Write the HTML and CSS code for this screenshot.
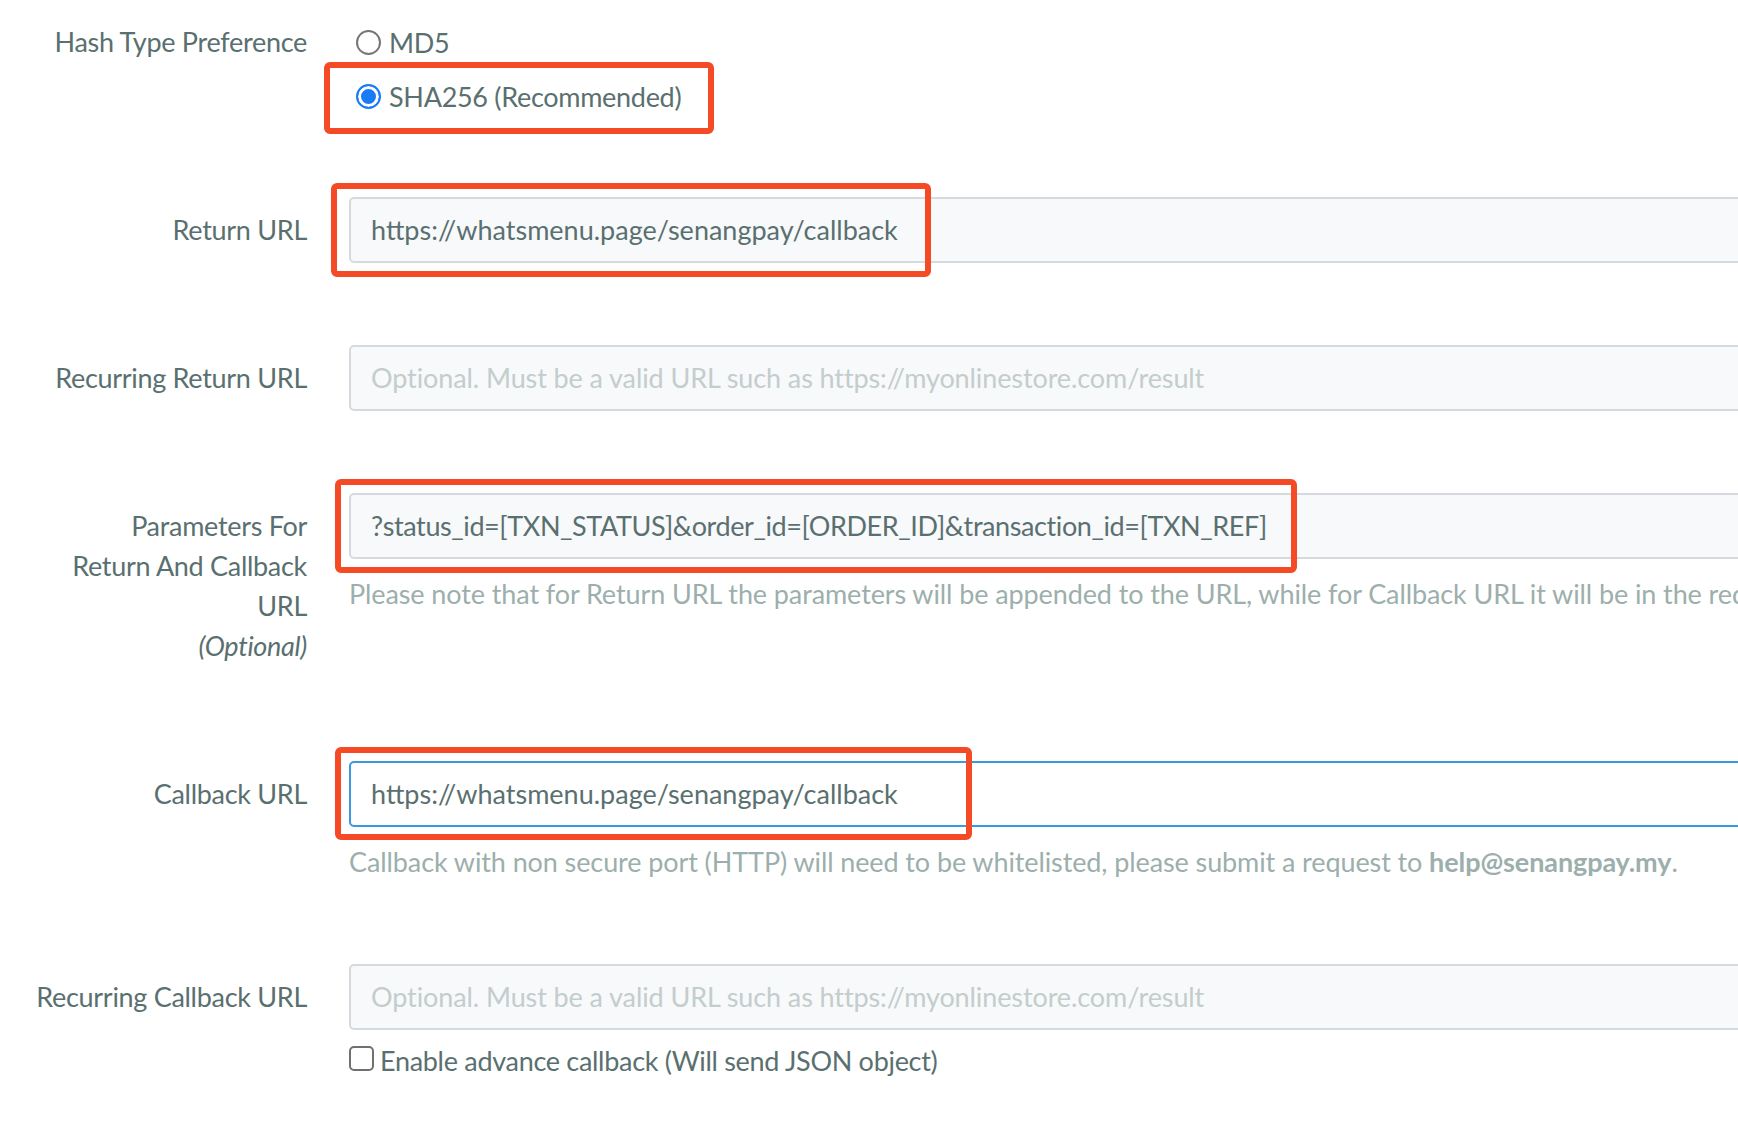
FILE: index.html
```html
<!DOCTYPE HTML>
<html lang="en">
<head>
<meta charset="UTF-8">
<title>Payment Settings</title>
<link rel="stylesheet" href="styles.css">
</head>
<body>
<div class="form">
  <div class="group hashGroup">
    <div class="label">Hash Type Preference</div>
    <div class="control radios">
      <div class="radio"><span class="dot"></span>MD5</div>
      <div class="radio marked"><span class="dot on"></span>SHA256 (Recommended)<span class="mark markHash"></span></div>
    </div>
  </div>

  <div class="group">
    <div class="label">Return URL</div>
    <div class="control">
      <div class="field">https://whatsmenu.page/senangpay/callback<span class="mark markReturn"></span></div>
    </div>
  </div>

  <div class="group">
    <div class="label">Recurring Return URL</div>
    <div class="control">
      <div class="field empty">Optional. Must be a valid URL such as https://myonlinestore.com/result</div>
    </div>
  </div>

  <div class="group">
    <div class="label">Parameters For<br>Return And Callback<br>URL<br><em>(Optional)</em></div>
    <div class="control">
      <div class="field tight">?status_id=[TXN_STATUS]&amp;order_id=[ORDER_ID]&amp;transaction_id=[TXN_REF]<span class="mark markParams"></span></div>
      <div class="help">Please note that for Return URL the parameters will be appended to the URL, while for Callback URL it will be in the request body.</div>
    </div>
  </div>

  <div class="group">
    <div class="label">Callback URL</div>
    <div class="control">
      <div class="field focus">https://whatsmenu.page/senangpay/callback<span class="mark markCallback"></span></div>
      <div class="help">Callback with non secure port (HTTP) will need to be whitelisted, please submit a request to <b>help@senangpay.my</b>.</div>
    </div>
  </div>

  <div class="group">
    <div class="label">Recurring Callback URL</div>
    <div class="control">
      <div class="field empty">Optional. Must be a valid URL such as https://myonlinestore.com/result</div>
      <div class="check"><span class="box"></span>Enable advance callback (Will send JSON object)</div>
    </div>
  </div>
</div>
</body>
</html>
```

FILE: styles.css
```css
* { margin: 0; padding: 0; box-sizing: border-box; }
html, body { background: #fff; overflow: hidden; }
body {
  font-family: Lato, "Liberation Sans", sans-serif;
  font-size: 27px;
  letter-spacing: -0.3px;
  color: #5a7070;
}
.form {
  width: 2300px;
  padding-top: 9px;
}
.group {
  display: flex;
  align-items: flex-start;
  margin-bottom: 82px;
}
.hashGroup { margin-bottom: 68px; }
.label {
  flex: 0 0 307px;
  padding: 13px 0;
  line-height: 40px;
  text-align: right;
}
.label em { font-style: italic; }
.control {
  flex: 1;
  margin-left: 42px;
  position: relative;
}

/* radios */
.radios { padding: 13px 0; }
.radio {
  position: relative;
  display: flex;
  align-items: center;
  height: 40px;
  padding-left: 7px;
}
.radio + .radio { margin-top: 14px; }
.dot {
  width: 25px;
  height: 25px;
  margin-right: 8px;
  border: 2px solid #767676;
  border-radius: 50%;
  background: #fff;
}
.dot.on {
  border: 2px solid #1a7cf5;
  background: #1a7cf5;
  box-shadow: inset 0 0 0 3px #fff;
}

/* inputs */
.field {
  position: relative;
  height: 66px;
  line-height: 62px;
  padding-left: 20px;
  background: #f8f9fb;
  border: 2px solid #d6d9de;
  border-radius: 5px;
  white-space: nowrap;
  letter-spacing: 0;
}
.field.tight { letter-spacing: -0.4px; }
.field.empty { color: #c3cdcc; letter-spacing: -0.1px; }
.field.focus { border-color: #3a9ae0; background: #fff; }
.help {
  margin-top: 15px;
  line-height: 40px;
  color: #9cafac;
  white-space: nowrap;
  letter-spacing: -0.1px;
}
.help b { font-weight: 700; }

.check {
  display: flex;
  align-items: center;
  margin-top: 10px;
  height: 40px;
}
.box {
  width: 25px;
  height: 25px;
  margin-right: 6px;
  margin-top: -4px;
  border: 2px solid #707070;
  border-radius: 5px;
  background: #fff;
}

/* annotation boxes */
.mark {
  position: absolute;
  border: 6px solid #f44a26;
  border-radius: 6px;
  pointer-events: none;
}
.markHash { left: -25px; top: -14px; width: 390px; height: 72px; }
.markReturn { left: -20px; top: -16px; width: 600px; height: 94px; }
.markParams { left: -16px; top: -16px; width: 962px; height: 94px; }
.markCallback { left: -16px; top: -16px; width: 637px; height: 93px; }
```
